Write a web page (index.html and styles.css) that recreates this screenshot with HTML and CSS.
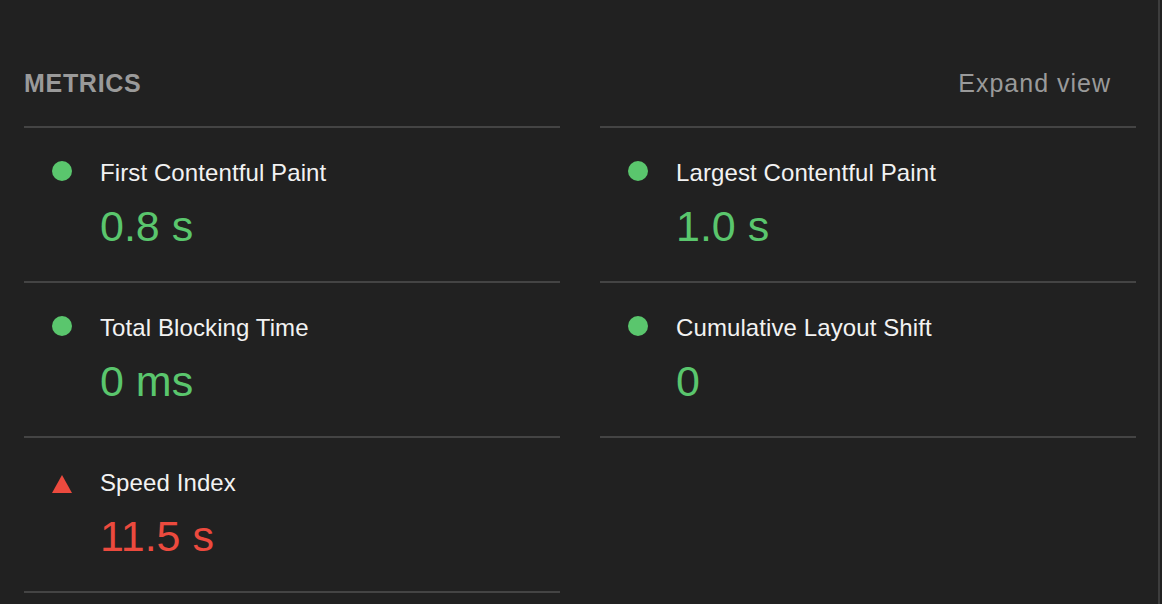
FILE: index.html
```html
<!DOCTYPE html>
<html lang="en">
<head>
<meta charset="utf-8">
<title>Metrics</title>
<link rel="stylesheet" href="styles.css">
</head>
<body>
<div class="frame">
  <section class="metrics">
    <header class="metrics-header">
      <h2 class="metrics-title">METRICS</h2>
      <span class="metrics-toggle">Expand view</span>
    </header>
    <div class="metrics-grid">
      <div class="metric">
        <span class="icon icon-pass"></span>
        <div class="metric-body">
          <div class="metric-label">First Contentful Paint</div>
          <div class="metric-value pass">0.8&nbsp;s</div>
        </div>
      </div>
      <div class="metric">
        <span class="icon icon-pass"></span>
        <div class="metric-body">
          <div class="metric-label">Largest Contentful Paint</div>
          <div class="metric-value pass">1.0&nbsp;s</div>
        </div>
      </div>
      <div class="metric">
        <span class="icon icon-pass"></span>
        <div class="metric-body">
          <div class="metric-label">Total Blocking Time</div>
          <div class="metric-value pass">0&nbsp;ms</div>
        </div>
      </div>
      <div class="metric">
        <span class="icon icon-pass"></span>
        <div class="metric-body">
          <div class="metric-label">Cumulative Layout Shift</div>
          <div class="metric-value pass">0</div>
        </div>
      </div>
      <div class="metric">
        <span class="icon icon-fail"></span>
        <div class="metric-body">
          <div class="metric-label">Speed Index</div>
          <div class="metric-value fail">11.5&nbsp;s</div>
        </div>
      </div>
    </div>
  </section>
</div>
</body>
</html>
```
FILE: styles.css
```css
html, body {
  margin: 0;
  padding: 0;
  background: #212121;
  height: 100%;
}

body {
  font-family: "Liberation Sans", Arial, Helvetica, sans-serif;
  color: #f2f2f2;
  overflow: hidden;
}

.frame {
  width: 1158px;
  height: 100%;
  border-right: 2px solid #3d3d3d;
  box-sizing: content-box;
}

.metrics {
  padding: 68px 22px 0 24px;
}

.metrics-header {
  display: flex;
  align-items: center;
  justify-content: space-between;
  height: 30px;
  margin-bottom: 28px;
}

.metrics-title {
  margin: 0;
  font-size: 25px;
  line-height: 30px;
  font-weight: 700;
  letter-spacing: 0.7px;
  color: #9a9a9a;
}

.metrics-toggle {
  font-size: 25px;
  line-height: 30px;
  letter-spacing: 1px;
  color: #9a9a9a;
  margin-right: 25px;
}

.metrics-grid {
  display: grid;
  grid-template-columns: 536px 536px;
  column-gap: 40px;
}

.metric {
  display: flex;
  align-items: flex-start;
  gap: 28px;
  padding: 31px 0 31px 28px;
  border-bottom: 2px solid #444444;
}

.metric:nth-child(1),
.metric:nth-child(2) {
  border-top: 2px solid #444444;
}

.icon {
  flex: none;
  width: 20px;
  height: 20px;
}

.icon-pass {
  border-radius: 50%;
  background: #5ac66d;
  width: 20px;
  height: 20px;
  margin-top: 2px;
}

.icon-fail {
  width: 0;
  height: 0;
  border-left: 10px solid transparent;
  border-right: 10px solid transparent;
  border-bottom: 18px solid #ec4a3e;
  margin-top: 6px;
}

.metric-body {
  display: flex;
  flex-direction: column;
  gap: 15px;
}

.metric-label {
  font-size: 24px;
  line-height: 28px;
  letter-spacing: 0.1px;
  color: #f2f2f2;
}

.metric-value {
  font-size: 43px;
  line-height: 48px;
}

.metric-value.pass {
  color: #5ac66d;
}

.metric-value.fail {
  color: #ec4a3e;
}
```
